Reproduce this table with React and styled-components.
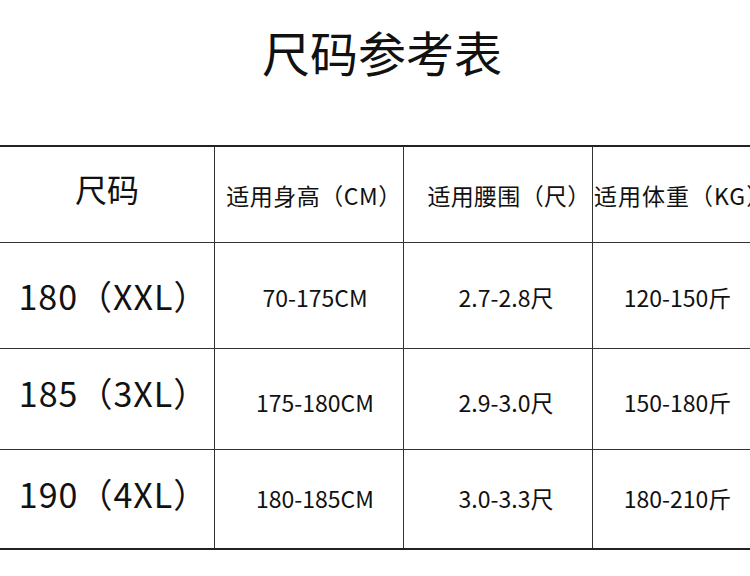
import React from "react";
import styled, { createGlobalStyle } from "styled-components";

const GlobalStyle = createGlobalStyle`
  html, body {
    margin: 0;
    padding: 0;
    background: #fff;
  }
  body {
    font-family: "Noto Sans CJK SC", "Noto Sans", sans-serif;
    color: #111;
  }
`;

const Page = styled.div`
  width: 750px;
  height: 576px;
  overflow: hidden;
  background: #fff;
`;

const Title = styled.h1`
  margin: 0;
  height: 145px;
  box-sizing: border-box;
  padding: 27px 0 0 14px;
  text-align: center;
  font-size: 48px;
  line-height: 48px;
  font-weight: 400;
`;

const Table = styled.div`
  display: grid;
  grid-template-columns: 214px 189px 189px 158px;
  grid-template-rows: 96px 106px 101px 98px;
  border-top: 2px solid #222;
  border-bottom: 2px solid #222;
`;

const Cell = styled.div`
  display: flex;
  align-items: center;
  justify-content: ${(p) => (p.$start ? "flex-start" : "center")};
  white-space: nowrap;
  overflow: visible;
  box-sizing: border-box;
  border-left: ${(p) => (p.$first ? "none" : "1px solid #333")};
  border-bottom: ${(p) => (p.$last ? "none" : "1px solid #333")};
  padding-left: ${(p) => p.$shift || 0}px;
  padding-top: ${(p) => Math.max(p.$dy || 0, 0)}px;
  padding-bottom: ${(p) => Math.max(-(p.$dy || 0), 0)}px;
  font-size: ${(p) => p.$size}px;
  letter-spacing: ${(p) => p.$track || 0}px;
  line-height: 1;
`;

const header = [
  { text: "尺码", size: 32, dy: -14 },
  { text: "适用身高（CM）", size: 23, dy: 2, shift: 10, track: 0.5 },
  { text: "适用腰围（尺）", size: 23, dy: 2, shift: 22, track: 0.3 },
  { text: "适用体重（KG）", size: 23, dy: 2, shift: 1, track: 1, start: true },
];

const rows = [
  { cells: ["180（XXL）", "70-175CM", "2.7-2.8尺", "120-150斤"], dy: 0, dy2: 4 },
  { cells: ["185（3XL）", "175-180CM", "2.9-3.0尺", "150-180斤"], dy: -12, dy2: 6 },
  { cells: ["190（4XL）", "180-185CM", "3.0-3.3尺", "180-210斤"], dy: -10, dy2: -2 },
];

const shifts = [13, 12, 16, 12];

export default function App() {
  return (
    <Page>
      <GlobalStyle />
      <Title>尺码参考表</Title>
      <Table>
        {header.map((h, i) => (
          <Cell
            key={h.text}
            $first={i === 0}
            $size={h.size}
            $dy={h.dy}
            $shift={h.shift}
            $track={h.track}
            $start={h.start}
          >
            {h.text}
          </Cell>
        ))}
        {rows.map((row, r) =>
          row.cells.map((c, i) => (
            <Cell
              key={c}
              $first={i === 0}
              $last={r === rows.length - 1}
              $size={i === 0 ? 34 : 23}
              $track={i === 0 ? 1 : 0}
              $shift={shifts[i]}
              $dy={i === 0 ? row.dy : row.dy2}
            >
              {c}
            </Cell>
          ))
        )}
      </Table>
    </Page>
  );
}
